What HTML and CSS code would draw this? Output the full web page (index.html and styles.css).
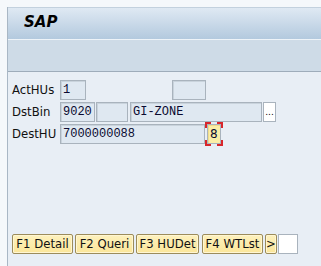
FILE: index.html
```html
<!DOCTYPE html>
<html lang="en">
<head>
    <meta charset="UTF-8">
    <title>SAP</title>
    <link rel="stylesheet" href="styles.css">
</head>
<body>
    <div class="frame">
        <div class="titlebar"><span class="sap">SAP</span></div>
        <div class="toolbar"></div>
        <div class="content">
            <div class="row">
                <label class="lbl">ActHUs</label>
                <span class="field w-acthu">1</span>
                <span class="field w-extra"></span>
            </div>
            <div class="row">
                <label class="lbl">DstBin</label>
                <span class="field w-bin">9020</span>
                <span class="field w-blank"></span>
                <span class="field w-zone">GI-ZONE</span>
                <span class="more">...</span>
            </div>
            <div class="row">
                <label class="lbl">DestHU</label>
                <span class="field w-hu">7000000088</span>
                <span class="focus">
                    <span class="field yellow">8</span>
                    <svg class="corners" width="18" height="24" viewBox="0 0 18 24">
                        <path d="M1 6V1H6M12 1H17V6M17 18V23H12M6 23H1V18" fill="none" stroke="#d8262b" stroke-width="2"/>
                    </svg>
                </span>
            </div>
            <div class="fkeys">
                <button class="fkey k1">F1 Detail</button>
                <button class="fkey k2">F2 Queri</button>
                <button class="fkey k3">F3 HUDet</button>
                <button class="fkey k4">F4 WTLst</button>
                <button class="fkey k5">&gt;</button>
                <span class="okbox"></span>
            </div>
        </div>
    </div>
</body>
</html>
```

FILE: styles.css
```css
body {
    margin: 0;
    padding: 0;
    background: #f5f8fb;
    font-family: "DejaVu Sans", Tahoma, sans-serif;
    overflow: hidden;
}

.frame {
    margin: 7px 0 0 7px;
    border-left: 1px solid #a9b7c5;
    height: 259px;
    background: #e8eef5;
}

.titlebar {
    height: 31px;
    border-top: 1px solid #c3d1de;
    background: linear-gradient(#dfe9f3, #b3c9de);
    border-bottom: 1px solid #eef3f8;
}

.sap {
    display: inline-block;
    margin: 5px 0 0 16px;
    font-family: "DejaVu Sans", Verdana, sans-serif;
    font-weight: bold;
    font-style: italic;
    font-size: 15px;
    color: #000;
}

.toolbar {
    height: 31px;
    background: #cedbe7;
    border-bottom: 1px solid #9eacba;
}

.content {
    padding: 8px 0 0 4px;
}

.row {
    display: flex;
    align-items: center;
    height: 20px;
    margin-bottom: 2px;
}

.lbl {
    width: 48px;
    font-size: 11.7px;
    color: #111;
}

.field {
    box-sizing: border-box;
    height: 20px;
    padding: 1px 0 0 2px;
    background: #dfe8f1;
    border: 1px solid #a9b3bd;
    box-shadow: inset 1px 1px 0 #c9d3dc;
    font-family: "Liberation Mono", "Courier New", monospace;
    font-size: 12px;
    line-height: 17px;
    color: #0a0a30;
}

.w-acthu { width: 26px; }
.w-extra { width: 34px; margin-left: 86px; }
.w-bin { width: 35px; }
.w-blank { width: 32px; margin-left: 1px; }
.w-zone { width: 132px; margin-left: 2px; }
.w-hu { width: 145px; }

.more {
    box-sizing: border-box;
    width: 13px;
    height: 20px;
    margin-left: 1px;
    background: #fff;
    border: 1px solid #a9b3bd;
    font-size: 9px;
    line-height: 18px;
    text-align: center;
}

.focus {
    position: relative;
    margin-left: 2px;
    display: flex;
}

.yellow {
    width: 14px;
    padding-left: 2px;
    background: #fbeea6;
    box-shadow: inset 1px 1px 0 #f0dc8a;
    font-family: "DejaVu Sans", Tahoma, sans-serif;
}

.corners {
    position: absolute;
    left: -2px;
    top: -2px;
}

.fkeys {
    display: flex;
    margin-top: 90px;
    height: 20px;
}

.fkey {
    box-sizing: border-box;
    height: 20px;
    margin: 0 2px 0 0;
    padding: 0;
    background: linear-gradient(#fdf1bd, #fbe69a);
    border: 1px solid #9c8c5b;
    box-shadow: inset 0 0 0 1px #fff6d2;
    border-radius: 2px;
    font-family: "DejaVu Sans", Tahoma, sans-serif;
    font-size: 11.7px;
    color: #111;
}

.k1 { width: 61px; }
.k2 { width: 59px; }
.k3 { width: 63px; margin-right: 3px; }
.k4 { width: 61px; }
.k5 { width: 12px; margin-right: 1px; }

.okbox {
    box-sizing: border-box;
    width: 20px;
    height: 20px;
    background: #fff;
    border: 1px solid #a9b3bd;
}
```
